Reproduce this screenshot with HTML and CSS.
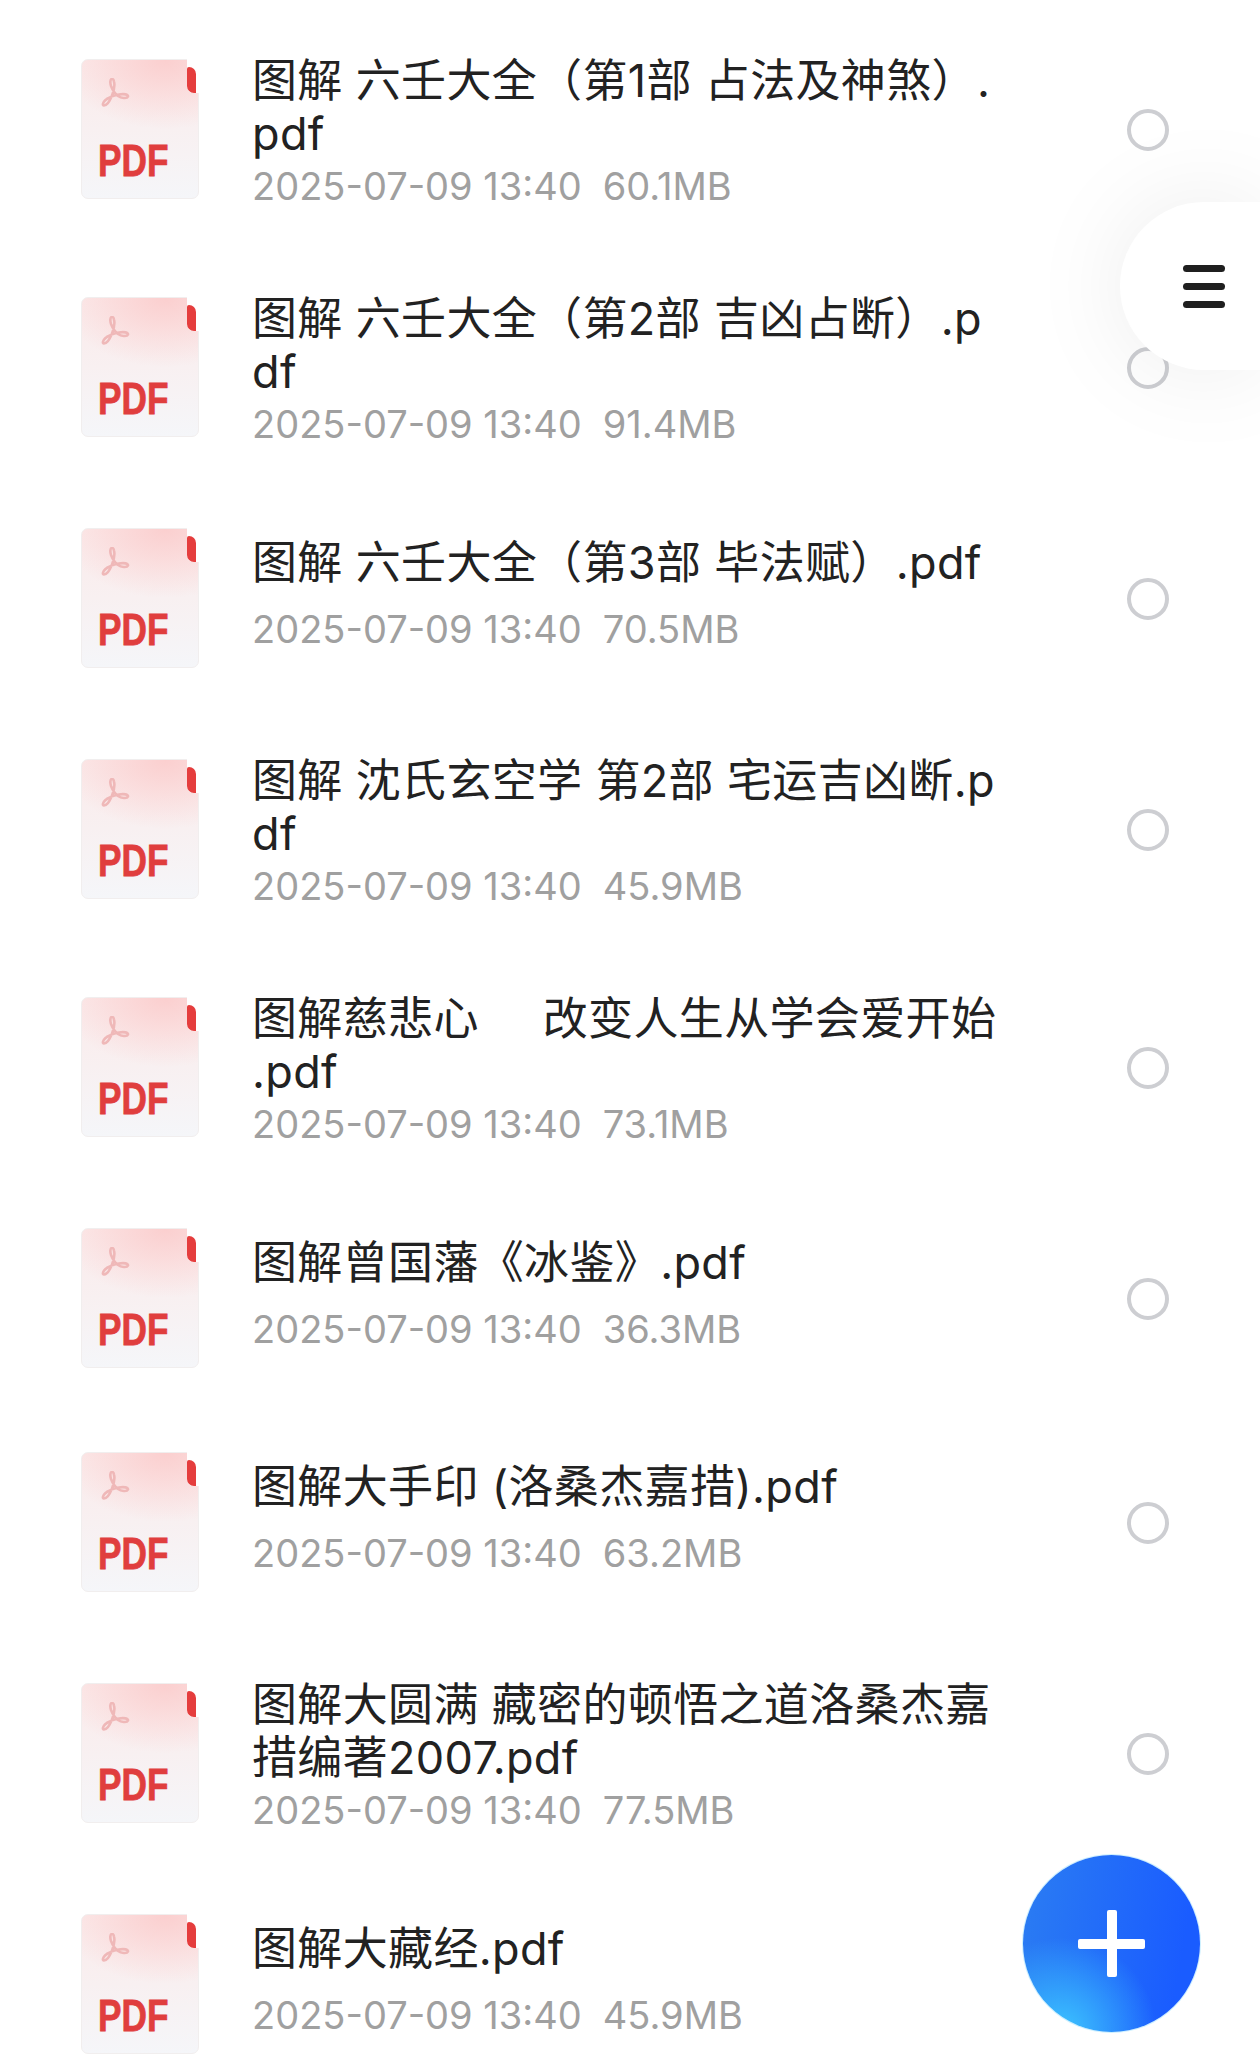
FILE: index.html
```html
<!DOCTYPE html>
<html lang="zh">
<head>
  <meta charset="UTF-8" />
  <title>文件列表</title>
  <link rel="stylesheet" href="styles.css">
</head>
<body>

<svg class="defs" width="0" height="0">
  <symbol id="acrobat" viewBox="0 0 30 30">
    <path d="M12 1c-2 0-2 4-1 7c2 5 4 8 7 10c3 2 9 3 10 .5c.5-2-4-3-9-2c-5 1-11 3-14 6c-2 2-3 5-1 5c3 0 6-5 8-10c2-5 3-10 2-14c-.3-2-1-2.500-2-2.500z" fill="none" stroke="#efb8b8" stroke-width="2.600"/>
  </symbol>
</svg>

<main class="file-list">

  <div class="row">
    <div class="file-icon"><span class="fold"></span><svg class="acro"><use href="#acrobat"/></svg><span class="pdf">PDF</span></div>
    <div class="info">
      <div class="name">图解 六壬大全（第1部 占法及神煞）.<br>pdf</div>
      <div class="meta">2025-07-09 13:40<span class="size">60.1MB</span></div>
    </div>
    <span class="radio"></span>
  </div>

  <div class="row">
    <div class="file-icon"><span class="fold"></span><svg class="acro"><use href="#acrobat"/></svg><span class="pdf">PDF</span></div>
    <div class="info">
      <div class="name">图解 六壬大全（第2部 吉凶占断）.p<br>df</div>
      <div class="meta">2025-07-09 13:40<span class="size">91.4MB</span></div>
    </div>
    <span class="radio"></span>
  </div>

  <div class="row single">
    <div class="file-icon"><span class="fold"></span><svg class="acro"><use href="#acrobat"/></svg><span class="pdf">PDF</span></div>
    <div class="info">
      <div class="name">图解 六壬大全（第3部 毕法赋）.pdf</div>
      <div class="meta">2025-07-09 13:40<span class="size">70.5MB</span></div>
    </div>
    <span class="radio"></span>
  </div>

  <div class="row">
    <div class="file-icon"><span class="fold"></span><svg class="acro"><use href="#acrobat"/></svg><span class="pdf">PDF</span></div>
    <div class="info">
      <div class="name">图解 沈氏玄空学 第2部 宅运吉凶断.p<br>df</div>
      <div class="meta">2025-07-09 13:40<span class="size">45.9MB</span></div>
    </div>
    <span class="radio"></span>
  </div>

  <div class="row">
    <div class="file-icon"><span class="fold"></span><svg class="acro"><use href="#acrobat"/></svg><span class="pdf">PDF</span></div>
    <div class="info">
      <div class="name">图解慈悲心<span class="wide-gap"></span>改变人生从学会爱开始<br>.pdf</div>
      <div class="meta">2025-07-09 13:40<span class="size">73.1MB</span></div>
    </div>
    <span class="radio"></span>
  </div>

  <div class="row single">
    <div class="file-icon"><span class="fold"></span><svg class="acro"><use href="#acrobat"/></svg><span class="pdf">PDF</span></div>
    <div class="info">
      <div class="name">图解曾国藩《冰鉴》.pdf</div>
      <div class="meta">2025-07-09 13:40<span class="size">36.3MB</span></div>
    </div>
    <span class="radio"></span>
  </div>

  <div class="row single">
    <div class="file-icon"><span class="fold"></span><svg class="acro"><use href="#acrobat"/></svg><span class="pdf">PDF</span></div>
    <div class="info">
      <div class="name">图解大手印 (洛桑杰嘉措).pdf</div>
      <div class="meta">2025-07-09 13:40<span class="size">63.2MB</span></div>
    </div>
    <span class="radio"></span>
  </div>

  <div class="row">
    <div class="file-icon"><span class="fold"></span><svg class="acro"><use href="#acrobat"/></svg><span class="pdf">PDF</span></div>
    <div class="info">
      <div class="name">图解大圆满 藏密的顿悟之道洛桑杰嘉<br>措编著2007.pdf</div>
      <div class="meta">2025-07-09 13:40<span class="size">77.5MB</span></div>
    </div>
    <span class="radio"></span>
  </div>

  <div class="row single">
    <div class="file-icon"><span class="fold"></span><svg class="acro"><use href="#acrobat"/></svg><span class="pdf">PDF</span></div>
    <div class="info">
      <div class="name">图解大藏经.pdf</div>
      <div class="meta">2025-07-09 13:40<span class="size">45.9MB</span></div>
    </div>
    <span class="radio"></span>
  </div>

</main>

<div class="menu-pill">
  <span class="bar"></span>
  <span class="bar"></span>
  <span class="bar"></span>
</div>

<div class="fab">
  <span class="plus-h"></span>
  <span class="plus-v"></span>
</div>

</body>
</html>
```

FILE: styles.css
```css
html, body {
  height: 2072px;
  overflow: hidden;
}
body {
  margin: 0;
  background: #fff;
  color: #222;
  font-family: Inter, 'Noto Sans CJK SC', sans-serif;
}
.defs {
  position: absolute;
}
.file-list {
  padding: 11px 91px 0 81px;
}
.row {
  display: flex;
  align-items: center;
  height: 238px;
}
.row.single {
  height: 224px;
}
.file-icon {
  position: relative;
  top: -1px;
  flex: none;
  width: 118px;
  height: 140px;
  border-radius: 7px;
  box-sizing: border-box;
  border: 1px solid #f1eeee;
  background:
    radial-gradient(ellipse 90% 50% at 72% 0, #fbcfcf 0%, rgba(251, 207, 207, 0) 100%),
    linear-gradient(180deg, #fbeaea 0%, #f8f0f1 50%, #f5f6f9 100%);
}
.fold {
  position: absolute;
  top: -1px;
  right: -1px;
  width: 12px;
  height: 34px;
  background: #fff;
  border-radius: 0 0 0 6px;
}
.fold::after {
  content: "";
  position: absolute;
  top: 8px;
  left: 0;
  width: 9px;
  height: 26px;
  background: #e53d3d;
  border-radius: 2px 7px 0 7px;
}
.acro {
  position: absolute;
  left: 18px;
  top: 18px;
  width: 30px;
  height: 30px;
}
.pdf {
  position: absolute;
  left: 16px;
  top: 76px;
  font-family: 'Liberation Sans', sans-serif;
  font-weight: bold;
  font-size: 44px;
  line-height: 50px;
  color: #e03e3e;
  -webkit-text-stroke: 0.8px #e03e3e;
  transform: scaleX(0.8);
  transform-origin: left center;
}
.info {
  flex: 1;
  margin-left: 53px;
  padding-top: 6px;
}
.single .info {
  padding: 0 0 7px;
}
.name {
  font-size: 45px;
  line-height: 53px;
  letter-spacing: 0.35px;
  white-space: nowrap;
}
.single .name {
  margin-bottom: 14px;
}
.wide-gap {
  display: inline-block;
  width: 64px;
}
.meta {
  font-size: 38px;
  line-height: 53px;
  color: #a0a0a0;
  white-space: nowrap;
}
.size {
  margin-left: 21px;
}
.radio {
  flex: none;
  width: 42px;
  height: 42px;
  box-sizing: border-box;
  border: 4px solid #cdced2;
  border-radius: 50%;
}
.menu-pill {
  position: absolute;
  top: 202px;
  left: 1120px;
  width: 140px;
  height: 168px;
  box-sizing: border-box;
  padding-left: 63px;
  display: flex;
  flex-direction: column;
  justify-content: center;
  gap: 11px;
  background: #fff;
  border-radius: 84px 0 0 84px;
  box-shadow: 0 0 100px rgba(0, 0, 0, 0.08);
}
.bar {
  width: 42px;
  height: 7px;
  border-radius: 4px;
  background: #1f1f1f;
}
.fab {
  position: absolute;
  left: 1023px;
  top: 1855px;
  width: 177px;
  height: 177px;
  border-radius: 50%;
  background:
    radial-gradient(circle at 22% 100%, #3cc4ff 0%, rgba(60, 196, 255, 0) 42%),
    linear-gradient(100deg, #2b7df2 0%, #1a5cff 85%);
  box-shadow: 0 0 0 1px rgba(170, 230, 255, 0.6);
}
.plus-h, .plus-v {
  position: absolute;
  background: #fff;
  border-radius: 2px;
}
.plus-h {
  left: 55px;
  top: 84px;
  width: 67px;
  height: 10px;
}
.plus-v {
  left: 84px;
  top: 55px;
  width: 10px;
  height: 67px;
}
```
